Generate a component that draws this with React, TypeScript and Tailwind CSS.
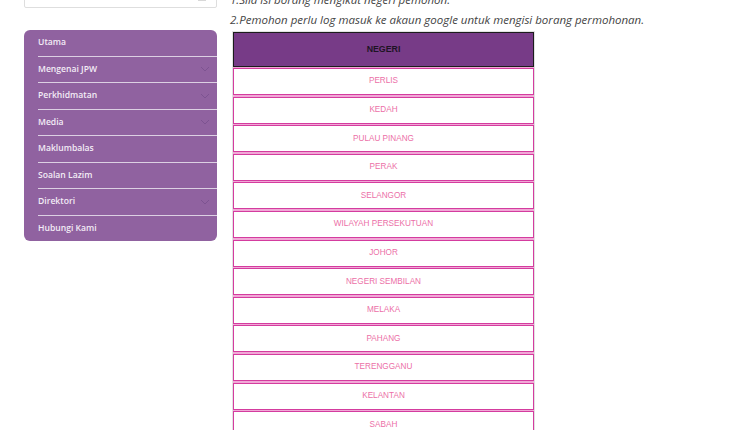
import React from "react";

const menu = [
  { label: "Utama", sub: false },
  { label: "Mengenai JPW", sub: true },
  { label: "Perkhidmatan", sub: true },
  { label: "Media", sub: true },
  { label: "Maklumbalas", sub: false },
  { label: "Soalan Lazim", sub: false },
  { label: "Direktori", sub: true },
  { label: "Hubungi Kami", sub: false },
];

const states = [
  "PERLIS",
  "KEDAH",
  "PULAU PINANG",
  "PERAK",
  "SELANGOR",
  "WILAYAH PERSEKUTUAN",
  "JOHOR",
  "NEGERI SEMBILAN",
  "MELAKA",
  "PAHANG",
  "TERENGGANU",
  "KELANTAN",
  "SABAH",
  "SARAWAK",
];

function Chevron() {
  return (
    <svg width="10" height="6" viewBox="0 0 10 6" fill="none">
      <path d="M1 1l4 4 4-4" stroke="#7a5190" strokeWidth="0.9" />
    </svg>
  );
}

export default function App() {
  return (
    <div className="w-[750px] h-[430px] overflow-hidden bg-white">
      <div className="flex items-start pl-[24px] -mt-[10px]">
        <div className="w-[193px] flex flex-col shrink-0">
          <div className="h-[28px] -mt-[10px] bg-white border border-[#dedede] rounded-[2px] flex items-end justify-end pr-[10px] pb-[6px]">
            <span className="block w-[8px] h-[3px] bg-[#d8d8d8]"></span>
          </div>
          <div className="mt-[22px] bg-[#9062a0] rounded-[6px] pl-[14px] overflow-hidden" style={{ fontFamily: '"Open Sans", sans-serif' }}>
            {menu.map((m, i) => (
              <div
                key={m.label}
                className={
                  "flex items-center justify-between pr-[7px] text-[8.6px] font-semibold text-[#f3ecf6] " +
                  (i < menu.length - 1 ? "h-[26.5px] border-b border-[#dcd0e3]" : "h-[25.5px]")
                }
              >
                <span>{m.label}</span>
                {m.sub && <Chevron />}
              </div>
            ))}
          </div>
        </div>
        <div className="ml-[13px] flex flex-col" style={{ fontFamily: '"Open Sans", sans-serif' }}>
          <p className="italic text-[11.5px] leading-[20px] text-[#444] whitespace-nowrap">1.Sila isi borang mengikut negeri pemohon.</p>
          <p className="italic text-[11.5px] leading-[20px] text-[#444] whitespace-nowrap">2.Pemohon perlu log masuk ke akaun google untuk mengisi borang permohonan.</p>
          <div className="mt-[1px] ml-[2px] w-[303px] border-l border-r border-t border-[#e2e2e2] flex flex-col gap-[1.6px] bg-[#f1a8d6]" style={{ fontFamily: '"Liberation Sans", Arial, sans-serif' }}>
            <div className="h-[34.5px] bg-[#773b87] border border-[#1c1c1c] flex items-center justify-center text-[8.8px] font-bold text-[#1e1424]">
              NEGERI
            </div>
            {states.map((s) => (
              <div
                key={s}
                className="h-[27px] bg-white border border-[#d43c9f] flex items-center justify-center text-[8.2px] text-[#ec6fa7]"
              >
                {s}
              </div>
            ))}
          </div>
        </div>
      </div>
    </div>
  );
}
